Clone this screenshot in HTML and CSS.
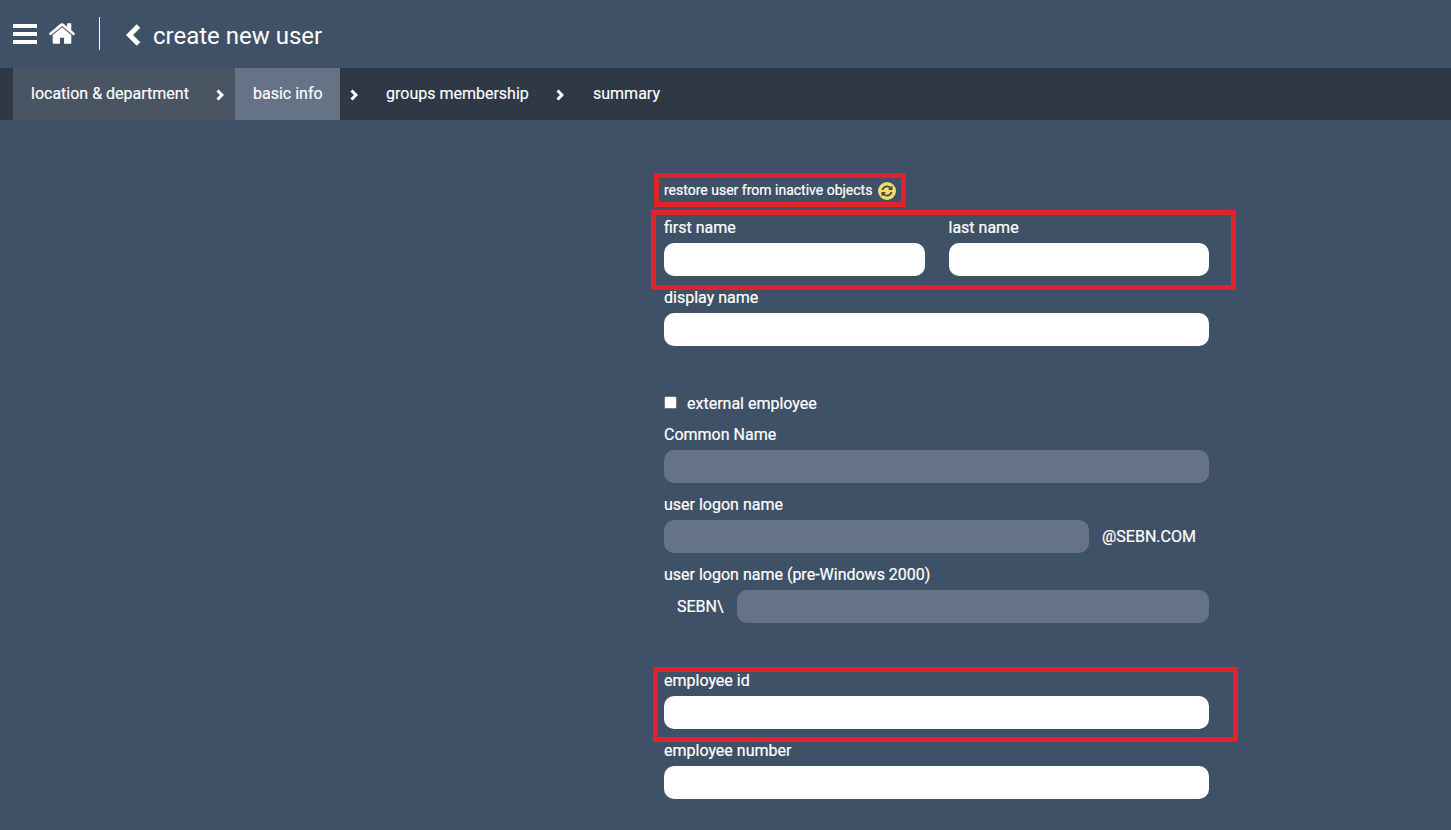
FILE: index.html
```
<!DOCTYPE html>
<html lang="en">
<head>
<meta charset="utf-8">
<title>create new user</title>
<link rel="stylesheet" href="styles.css">
</head>
<body>
<header class="topbar">
  <svg class="menu" viewBox="0 0 24 20"><path d="M0 0h24v4H0zM0 8h24v4H0zM0 16h24v4H0z"/></svg>
  <svg class="home" viewBox="26 253 1612 1283"><path d="M1408 992v480q0 26-19 45t-45 19H960v-384H704v384H320q-26 0-45-19t-19-45V992q0-1 .5-3t.5-3l575-474 575 474q1 2 1 6zm223-69l-62 74q-8 9-21 11h-3q-13 0-21-7L832 424 140 1001q-12 8-24 7-13-2-21-11l-62-74q-8-10-7-23.500T37 878l719-599q32-26 76-26t76 26l244 204V288q0-14 9-23t23-9h192q14 0 23 9t9 23v408l219 182q10 8 11 21.500t-7 23.500z"/></svg>
  <span class="divider"></span>
  <svg class="back" viewBox="0 0 15 22"><path d="M12.500 2 3.500 11l9 9"/></svg>
  <h1 class="title">create new user</h1>
</header>
<nav class="steps">
  <div class="step done"><span>location &amp; department</span><svg class="next" viewBox="0 0 8 12"><path d="M1.500 1.500 6 6l-4.500 4.500"/></svg></div>
  <div class="step current"><span>basic info</span></div>
  <svg class="next lead" viewBox="0 0 8 12"><path d="M1.500 1.500 6 6l-4.500 4.500"/></svg>
  <div class="step groups"><span>groups membership</span></div>
  <svg class="next" viewBox="0 0 8 12"><path d="M1.500 1.500 6 6l-4.500 4.500"/></svg>
  <div class="step summary"><span>summary</span></div>
</nav>
<main class="form">
  <div class="restore"><span class="restore-text">restore user from inactive objects</span>
    <svg class="sync" viewBox="0 0 18 18"><circle class="disc" cx="9" cy="9" r="9"/><path class="arrows" transform="translate(3.500 3.500) scale(.00716)" d="M1511 928q0 5-1 7-64 268-268 434.500T764 1536q-146 0-282.500-55T238 1324l-129 129q-19 19-45 19t-45-19-19-45V960q0-26 19-45t45-19h448q26 0 45 19t19 45-19 45l-137 137q71 66 161 102t187 36q134 0 250-65t186-179q11-17 53-117 8-23 30-23h192q13 0 22.500 9.500t9.500 22.500zm25-800v448q0 26-19 45t-45 19h-448q-26 0-45-19t-19-45 19-45l138-138Q969 256 768 256q-134 0-250 65T332 500q-11 17-53 117-8 23-30 23H50q-13 0-22.500-9.500T18 608v-7q65-268 270-434.500T768 0q146 0 284 55.500T1297 212l130-129q19-19 45-19t45 19 19 45z"/></svg>
    <i class="mark mark-restore"></i></div>
  <div class="row names">
    <label class="field"><span>first name</span><input class="box" type="text"></label>
    <label class="field"><span>last name</span><input class="box" type="text"></label>
    <i class="mark mark-names"></i>
  </div>
  <label class="field"><span>display name</span><input class="box" type="text"></label>
  <label class="external"><i class="check"></i><span>external employee</span></label>
  <label class="field"><span>Common Name</span><input class="box" type="text" disabled></label>
  <label class="field"><span>user logon name</span><div class="row logon"><input class="box" type="text" disabled><span class="affix">@SEBN.COM</span></div></label>
  <label class="field"><span>user logon name (pre-Windows 2000)</span><div class="row legacy"><span class="affix">SEBN\</span><input class="box" type="text" disabled></div></label>
  <label class="field employee"><span>employee id</span><input class="box" type="text"><i class="mark mark-id"></i></label>
  <label class="field"><span>employee number</span><input class="box" type="text"></label>
</main>
</body>
</html>
```
FILE: styles.css
```
* { box-sizing: border-box; }
body { margin: 0; height: 830px; overflow: hidden; background: #3f5166; color: #fff; font: 16px/20px Roboto, sans-serif; }
.topbar { height: 68px; display: flex; align-items: flex-start; padding-left: 13px; }
.topbar svg { fill: #fff; flex: none; }
.menu { width: 24px; height: 20px; margin-top: 24px; }
.home { width: 26px; height: 21px; margin: 23px 0 0 12px; }
.divider { width: 1px; height: 33px; margin: 17px 0 0 24px; background: #fff; }
.topbar .back { width: 15px; height: 22px; margin: 24px 0 0 26px; fill: none; stroke: #fff; stroke-width: 5; }
.title { margin: 21px 0 0 12px; font-size: 24px; line-height: 30px; font-weight: 400; white-space: nowrap; }
.steps { height: 52px; padding-left: 13px; background: #2e3945; display: flex; align-items: center; -webkit-text-stroke: .15px #fff; }
.step { height: 52px; display: flex; align-items: center; padding: 0 18px; white-space: nowrap; }
.done { width: 222px; background: #495563; justify-content: space-between; padding-right: 11px; }
.current { width: 105px; background: #667387; }
.next { width: 8px; height: 12px; flex: none; margin-top: 2px; fill: none; stroke: #fff; stroke-width: 3; }
.lead { margin-left: 10px; }
.groups { width: 198px; padding-left: 28px; }
.summary { padding-left: 29px; }
.form { width: 545px; margin: 60px 0 0 664px; -webkit-text-stroke: .2px #fff; }
.restore { position: relative; width: 240px; height: 37px; display: flex; align-items: flex-start; }
.restore-text { font-size: 14px; white-space: nowrap; }
.sync { width: 18px; height: 18px; margin: 2px 0 0 6px; }
.disc { fill: #eedd68; }
.arrows { fill: #45483b; }
.row { display: flex; }
.names { position: relative; gap: 24px; }
.names .field { flex: 1; }
.field { display: flex; flex-direction: column; height: 70px; padding-top: 1px; gap: 5px; }
.box { display: block; width: 100%; min-width: 0; height: 33px; border: 0; border-radius: 10px; background: #fff; }
.box:disabled { background: #667387; }
.external { height: 67px; padding-top: 37px; display: flex; align-items: flex-start; gap: 10px; }
.check { width: 13px; height: 13px; margin-top: 2px; background: #fff; border: 1px solid #767676; border-radius: 2px; }
.affix { line-height: 33px; }
.logon .box { width: 425px; }
.logon .affix { padding-left: 13px; }
.legacy .affix { width: 73px; flex: none; padding-left: 13px; }
.employee { position: relative; margin-top: 36px; }
.mark { position: absolute; border: 5px solid #e0222b; pointer-events: none; }
.mark-restore { left: -10px; top: -7px; width: 252px; height: 34px; }
.mark-names { left: -13px; top: -7px; width: 585px; height: 80px; }
.mark-id { left: -11px; top: -3px; width: 585px; height: 75px; }
```
